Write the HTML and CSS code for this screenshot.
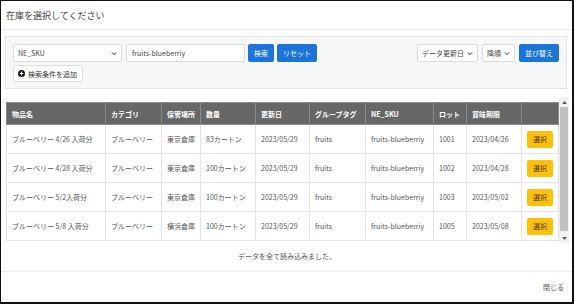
FILE: index.html
```html
<!DOCTYPE html>
<html lang="ja">
<head>
    <meta charset="UTF-8">
    <meta name="viewport" content="width=device-width, initial-scale=1.0">
    <title>在庫を選択</title>
    <link rel="stylesheet" href="styles.css">
</head>
<body>
    <div class="modal">
        <div class="modal-header">
            <h1>在庫を選択してください</h1>
        </div>

        <div class="modal-body">
            <div class="search-panel">
                <div class="search-row">
                    <div class="search-group">
                        <select class="form-select key-select">
                            <option>NE_SKU</option>
                        </select>
                        <input type="text" class="form-input" value="fruits-blueberriy">
                        <button class="btn btn-blue">検索</button>
                        <button class="btn btn-blue">リセット</button>
                    </div>
                    <div class="search-group">
                        <select class="form-select sort-select">
                            <option>データ更新日</option>
                        </select>
                        <select class="form-select order-select">
                            <option>降順</option>
                        </select>
                        <button class="btn btn-blue">並び替え</button>
                    </div>
                </div>
                <button class="btn btn-add">
                    <svg width="7" height="7" viewBox="0 0 10 10">
                        <circle cx="5" cy="5" r="5" fill="#111"/>
                        <path d="M5 2.3v5.4M2.3 5h5.4" stroke="#fff" stroke-width="1.6"/>
                    </svg>
                    検索条件を追加
                </button>
            </div>

            <div class="table-area">
                <div class="table-scroll">
                    <table class="stock-table">
                        <colgroup>
                            <col style="width:99px"><col style="width:56px"><col style="width:39px">
                            <col style="width:55px"><col style="width:54px"><col style="width:56px">
                            <col style="width:68px"><col style="width:33px"><col style="width:55px">
                            <col>
                        </colgroup>
                        <thead>
                            <tr>
                                <th>物品名</th>
                                <th>カテゴリ</th>
                                <th>保管場所</th>
                                <th>数量</th>
                                <th>更新日</th>
                                <th>グループタグ</th>
                                <th>NE_SKU</th>
                                <th>ロット</th>
                                <th>賞味期限</th>
                                <th></th>
                            </tr>
                        </thead>
                        <tbody>
                            <tr>
                                <td>ブルーベリー 4/26 入荷分</td>
                                <td>ブルーベリー</td>
                                <td>東京倉庫</td>
                                <td>83カートン</td>
                                <td>2023/05/29</td>
                                <td>fruits</td>
                                <td>fruits-blueberriy</td>
                                <td>1001</td>
                                <td>2023/04/26</td>
                                <td><button class="btn btn-select">選択</button></td>
                            </tr>
                            <tr>
                                <td>ブルーベリー 4/28 入荷分</td>
                                <td>ブルーベリー</td>
                                <td>東京倉庫</td>
                                <td>100カートン</td>
                                <td>2023/05/29</td>
                                <td>fruits</td>
                                <td>fruits-blueberriy</td>
                                <td>1002</td>
                                <td>2023/04/28</td>
                                <td><button class="btn btn-select">選択</button></td>
                            </tr>
                            <tr>
                                <td>ブルーベリー 5/2入荷分</td>
                                <td>ブルーベリー</td>
                                <td>東京倉庫</td>
                                <td>100カートン</td>
                                <td>2023/05/29</td>
                                <td>fruits</td>
                                <td>fruits-blueberriy</td>
                                <td>1003</td>
                                <td>2023/05/02</td>
                                <td><button class="btn btn-select">選択</button></td>
                            </tr>
                            <tr>
                                <td>ブルーベリー 5/8 入荷分</td>
                                <td>ブルーベリー</td>
                                <td>横浜倉庫</td>
                                <td>100カートン</td>
                                <td>2023/05/29</td>
                                <td>fruits</td>
                                <td>fruits-blueberriy</td>
                                <td>1005</td>
                                <td>2023/05/08</td>
                                <td><button class="btn btn-select">選択</button></td>
                            </tr>
                        </tbody>
                    </table>
                </div>
                <!-- スクロールバー（表示用） -->
                <div class="scrollbar">
                    <svg class="sb-arrow" width="5" height="3" viewBox="0 0 6 4"><path d="M0 4l3-4 3 4z" fill="#505050"/></svg>
                    <div class="sb-thumb"></div>
                    <svg class="sb-arrow" width="5" height="3" viewBox="0 0 6 4"><path d="M0 0l3 4 3-4z" fill="#505050"/></svg>
                </div>
            </div>

            <p class="load-msg">データを全て読み込みました。</p>
        </div>

        <div class="modal-footer">
            <button class="btn-link">閉じる</button>
        </div>
    </div>
</body>
</html>
```

FILE: styles.css
```css
* {
    box-sizing: border-box;
}
body {
    margin: 0;
    font-family: "Noto Sans CJK JP", "Noto Sans", sans-serif;
    font-size: 7px;
    color: #555;
    background: #fff;
}
.modal {
    width: 574px;
    height: 304px;
    display: flex;
    flex-direction: column;
    background: #fff;
    border-top: 1px solid #111;
    border-left: 1px solid #111;
    border-right: 2px solid #111;
    border-bottom: 2px solid #111;
}
.modal-header {
    height: 29px;
    flex-shrink: 0;
    display: flex;
    align-items: center;
    padding-left: 5px;
    border-bottom: 1px solid #e8e8e8;
}
.modal-header h1 {
    margin: 0;
    font-size: 9px;
    font-weight: normal;
    color: #444;
}
.modal-body {
    flex: 1;
    padding: 6px 3px 0 4px;
}
.search-panel {
    margin-right: 2px;
    padding: 7px 7px 6px 7px;
    background: #f6f7f9;
    border: 1px solid #e2e4e7;
    display: flex;
    flex-direction: column;
    align-items: flex-start;
    gap: 3px;
}
.search-row {
    width: 100%;
    display: flex;
    justify-content: space-between;
}
.search-group {
    display: flex;
    gap: 4px;
}
.search-group .btn-blue + .btn-blue {
    margin-left: -1px;
}
.form-select,
.form-input {
    height: 18px;
    font-family: inherit;
    font-size: 7px;
    color: #444;
    background-color: #fff;
    border: 1px solid #dcdcdc;
    border-radius: 2px;
    padding: 0 5px;
    outline: none;
}
.form-select {
    appearance: none;
    -webkit-appearance: none;
    padding-left: 4px;
    padding-right: 10px;
    background-image: url("data:image/svg+xml,%3Csvg xmlns='http://www.w3.org/2000/svg' width='8' height='6' viewBox='0 0 8 6'%3E%3Cpath d='M1 1.5l3 3 3-3' fill='none' stroke='%23333' stroke-width='1.3'/%3E%3C/svg%3E");
    background-repeat: no-repeat;
    background-position: right 4px center;
    background-size: 6px 5px;
}
.key-select {
    width: 109px;
}
.form-input {
    width: 119px;
    margin-right: -1px;
}
.sort-select {
    width: 61px;
}
.order-select {
    width: 33px;
}
.btn {
    font-family: inherit;
    font-size: 7px;
    border: none;
    border-radius: 2px;
    cursor: pointer;
    padding: 0 6px;
}
.btn-blue {
    height: 18px;
    background: #1a74dc;
    color: #fff;
}
.btn-add {
    height: 17px;
    display: flex;
    align-items: center;
    gap: 3px;
    padding: 0 5px 0 4px;
    background: #fff;
    border: 1px solid #dedede;
    color: #333;
}
.table-area {
    margin: 9px 0 0 1px;
    height: 145px;
    display: flex;
}
.table-scroll {
    flex: 1;
    padding-top: 4px;
    overflow: hidden;
}
.scrollbar {
    width: 10px;
    flex-shrink: 0;
    background: #f1f1f1;
    display: flex;
    flex-direction: column;
    align-items: center;
    padding: 3px 0;
    gap: 3px;
}
.sb-thumb {
    flex: 1;
    width: 8px;
    margin-bottom: 3px;
    background: #c1c1c1;
}
.stock-table {
    width: 100%;
    table-layout: fixed;
    border-collapse: collapse;
}
.stock-table th,
.stock-table td {
    border: 1px solid #e4e4e4;
    padding: 0 5px;
    text-align: left;
    white-space: nowrap;
    overflow: hidden;
}
.stock-table th {
    height: 22px;
    background: #676767;
    border-color: #8a8a8a;
    color: #fff;
    font-weight: bold;
}
.stock-table td {
    height: 29px;
    color: #555;
}
.btn-select {
    height: 17px;
    padding: 0 6px;
    background: #ffc107;
    color: #4a3d14;
}
.load-msg {
    margin: 8px 0 0;
    line-height: 10px;
    text-align: center;
    color: #555;
}
.modal-footer {
    height: 31px;
    flex-shrink: 0;
    display: flex;
    justify-content: flex-end;
    align-items: center;
    padding-right: 8px;
    border-top: 1px solid #ececec;
}
.btn-link {
    font-family: inherit;
    font-size: 7px;
    color: #555;
    background: none;
    border: none;
    padding: 0;
    cursor: pointer;
}
```
